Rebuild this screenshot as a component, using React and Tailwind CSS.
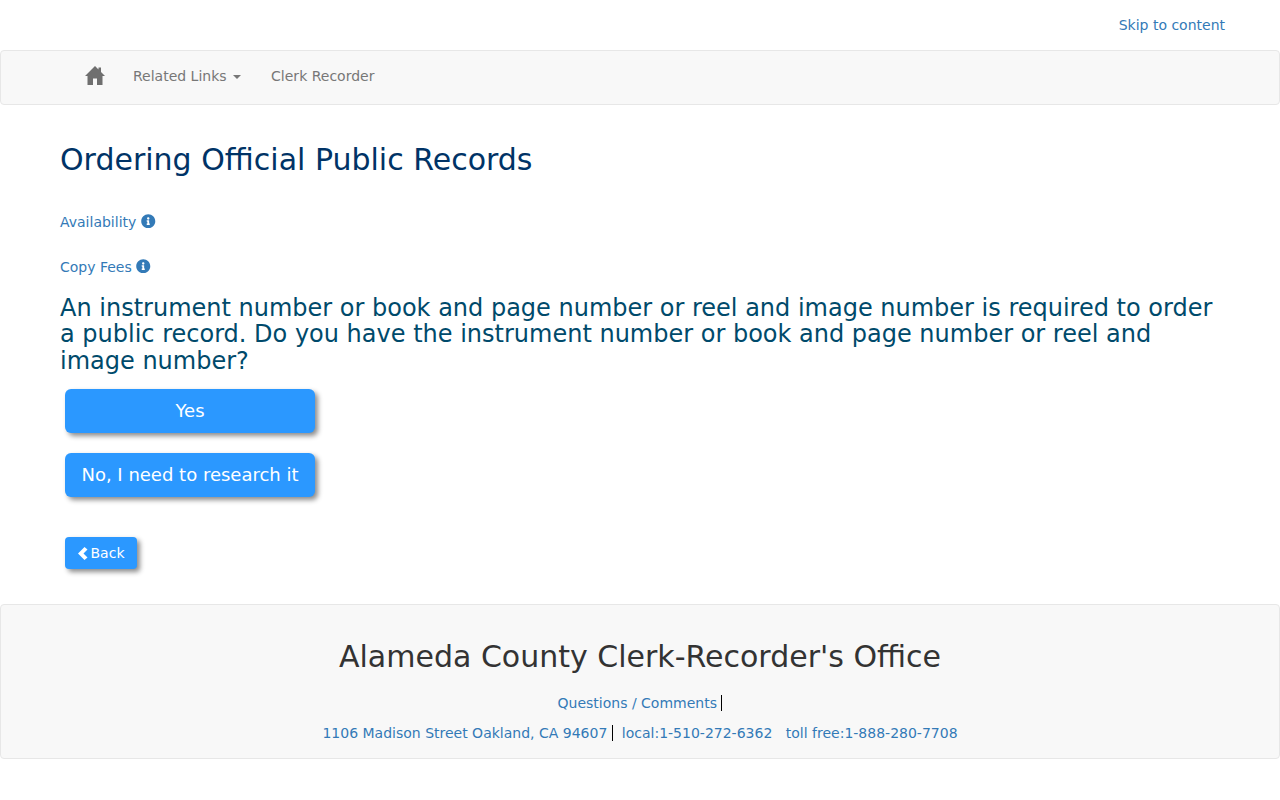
import { FaInfoCircle } from 'react-icons/fa';

function HomeIcon() {
  return (
    <svg viewBox="0 0 20 19" className="h-[19px] w-[20px] fill-[#6f6f6f]">
      <path d="M10 0 L13.5 3.5 L13.5 1.5 L16 1.5 L16 6 L20 10 L17.5 10 L17.5 19 L12 19 L12 12.5 L8 12.5 L8 19 L2.5 19 L2.5 10 L0 10 Z" />
    </svg>
  );
}

function ChevronLeft() {
  return (
    <svg viewBox="0 0 11 13" className="mr-[2px] h-[13px] w-[11px] fill-white">
      <path d="M6.5 0 L9.5 2.5 L5.5 6.5 L9.5 10.5 L6.5 13 L0 6.5 Z" />
    </svg>
  );
}

export default function App() {
  return (
    <div className="min-h-[800px] bg-white font-['DejaVu_Sans',sans-serif] text-sm text-[#333]">
      <div className="flex h-[50px] items-center justify-end pr-[55px]">
        <a href="#" className="text-[#337ab7]">Skip to content</a>
      </div>

      <nav className="flex h-[55px] items-center rounded border border-[#e7e7e7] bg-[#f8f8f8] pb-[4px] pl-[84px] text-[#777]">
        <a href="#" className="mr-[28px]"><HomeIcon /></a>
        <a href="#" className="mr-[30.5px] flex items-center">
          Related Links
          <span className="ml-[6px] mt-[2px] h-0 w-0 border-x-4 border-t-4 border-x-transparent border-t-[#777]" />
        </a>
        <a href="#">Clerk Recorder</a>
      </nav>

      <main className="px-[60px]">
        <h1 className="mt-[38px] text-[30px] leading-[33px] text-[#003366]">Ordering Official Public Records</h1>

        <a href="#" className="mt-[36px] flex items-center text-[#337ab7]">
          Availability <FaInfoCircle className="ml-[5px] -mt-[2px] h-[14.5px] w-[14.5px]" />
        </a>
        <a href="#" className="mt-[25px] flex items-center text-[#337ab7]">
          Copy Fees <FaInfoCircle className="ml-[4.5px] -mt-[2px] h-[14.5px] w-[14.5px]" />
        </a>

        <h2 className="mt-[18px] text-[24px] leading-[26.4px] text-[#004a6b]">
          An instrument number or book and page number or reel and image number is required to order a public record. Do you have the instrument number or book and page number or reel and image number?
        </h2>

        <div className="mt-[15px] ml-[5px] flex flex-col items-start">
          <button className="h-[44px] w-[250px] rounded-md bg-[#2b98ff] text-lg text-white shadow-[3px_3px_5px_rgba(0,0,0,0.45)]">Yes</button>
          <button className="mt-[20px] h-[44px] w-[250px] rounded-md bg-[#2b98ff] text-lg text-white shadow-[3px_3px_5px_rgba(0,0,0,0.45)]">No, I need to research it</button>
          <button className="mt-[40px] flex h-[32px] w-[72px] items-center justify-center rounded bg-[#2b98ff] text-sm text-white shadow-[3px_3px_5px_rgba(0,0,0,0.45)]">
            <ChevronLeft />Back
          </button>
        </div>
      </main>

      <footer className="mt-[35px] h-[155px] rounded border border-[#e7e7e7] bg-[#f8f8f8] pt-[35px] text-center text-[#337ab7]">
        <h2 className="text-[30px] leading-[33px] text-[#333]">Alameda County Clerk-Recorder's Office</h2>
        <p className="mt-[20px] leading-[20px]">
          <a href="#" className="border-r border-black pr-[4.5px]">Questions / Comments</a>
        </p>
        <p className="mt-[10px] leading-[20px]">
          <a href="#" className="border-r border-black pr-[4.5px]">1106 Madison Street Oakland, CA 94607</a>
          <a href="#" className="ml-[9px]">local:1-510-272-6362</a>
          <a href="#" className="ml-[13.5px]">toll free:1-888-280-7708</a>
        </p>
      </footer>
    </div>
  );
}
